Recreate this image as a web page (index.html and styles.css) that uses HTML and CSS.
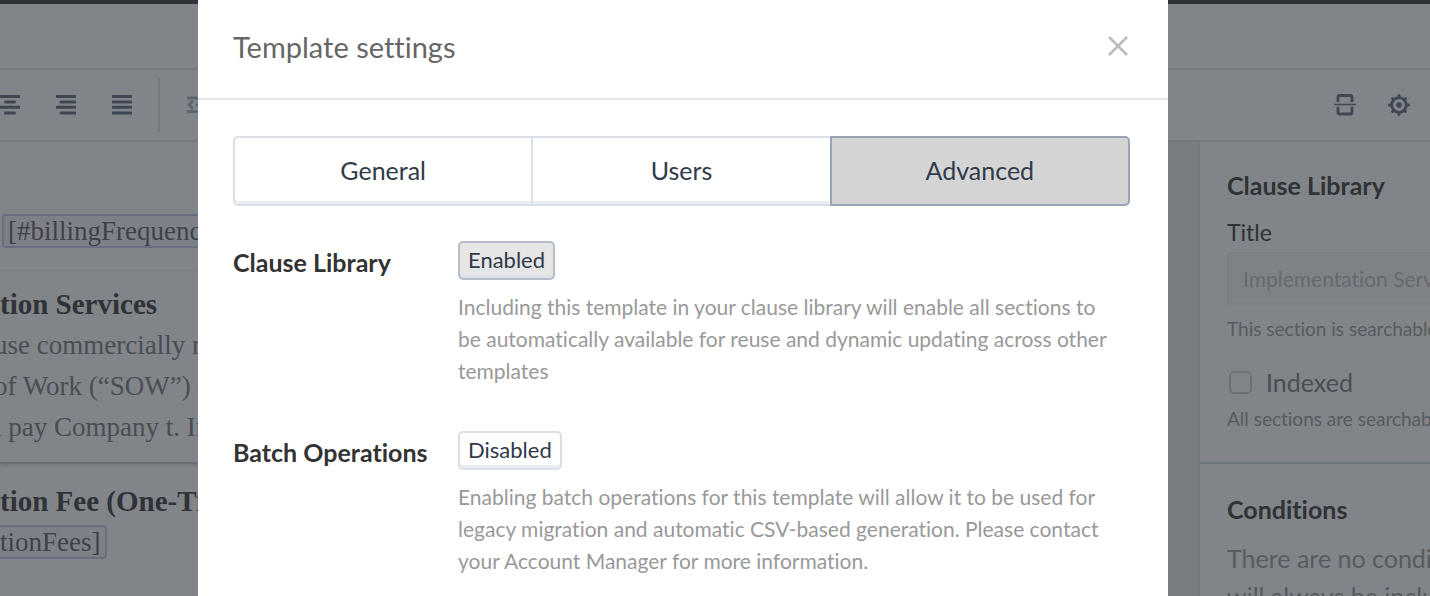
FILE: index.html
```html
<!DOCTYPE html>
<html lang="en">
<head>
  <meta charset="UTF-8" />
  <meta name="viewport" content="width=device-width, initial-scale=1.0"/>
  <title>Template settings</title>
  <link rel="stylesheet" href="styles.css">
</head>
<body>
  <div class="page">
    <div class="topbar"></div>
    <div class="header"></div>

    <div class="toolbar">
      <div class="tools">
        <button type="button" class="tool" aria-label="Align center">
          <svg width="20" height="20" viewBox="0 0 20 20"><path d="M1 1.500h18M5.500 7h9M1 12.300h18M5.500 18h9"/></svg>
        </button>
        <button type="button" class="tool" aria-label="Align right">
          <svg width="20" height="20" viewBox="0 0 20 20"><path d="M1 1.500h18M5 7h14M1 12.300h18M5 18h14"/></svg>
        </button>
        <button type="button" class="tool" aria-label="Justify">
          <svg width="20" height="20" viewBox="0 0 20 20"><path d="M1 1.500h18M1 7h18M1 12.300h18M1 18h18"/></svg>
        </button>
      </div>
      <div class="separator"></div>
      <button type="button" class="tool faded" aria-label="Page break">
        <svg width="20" height="20" viewBox="0 0 20 20"><path d="M2 3h17M2 16.500h17M6 6.500L3 9.800L6 13M11 9.800h8"/></svg>
      </button>
      <div class="tools right">
        <button type="button" class="tool" aria-label="Split section">
          <svg width="22" height="22" viewBox="0 0 22 22">
            <path class="frame" d="M4 8V3Q4 1.500 5.500 1.500h11Q18 1.500 18 3V8M4 12.800v5.700Q4 20 5.500 20h11Q18 20 18 18.500V12.800"/>
            <path class="thin" d="M0.500 10.500h21"/>
          </svg>
        </button>
        <button type="button" class="tool" aria-label="Settings">
          <svg width="22" height="22" viewBox="0 0 22 22">
            <circle class="frame" cx="11" cy="11" r="7.300"/>
            <circle class="solid" cx="11" cy="11" r="2.800"/>
            <path d="M11 1.500v2M11 18.500v2M1.500 11h2M18.500 11h2M4.600 4.600l1 1M16.400 16.400l1 1M17.400 4.600l-1 1M5.600 16.400l-1 1"/>
          </svg>
        </button>
      </div>
    </div>

    <div class="main">
      <div class="document">
        <div class="clause first">
          <p><span class="variable">[#billingFrequency]</span></p>
        </div>
        <div class="clause">
          <h2>tion Services</h2>
          <p class="shifted">use commercially reasonable</p>
          <p class="shifted">of Work (“SOW”) and</p>
          <p class="shifted">l pay Company t. In</p>
        </div>
        <div class="clause next">
          <h2>tion Fee (One-Time)</h2>
          <p><span class="variable cut">tionFees]</span></p>
        </div>
      </div>

      <div class="sidebar">
        <div class="panel">
          <h3>Clause Library</h3>
          <label for="title" class="field-label">Title</label>
          <input type="text" id="title" class="field" placeholder="Implementation Services">
          <p class="hint">This section is searchable</p>
          <div class="check">
            <input type="checkbox" id="indexed">
            <label for="indexed">Indexed</label>
          </div>
          <p class="hint">All sections are searchable</p>
        </div>
        <div class="panel">
          <h3>Conditions</h3>
          <p class="empty">There are no conditions<br>will always be included</p>
        </div>
      </div>
    </div>
  </div>

  <div class="backdrop">
    <div class="modal" role="dialog" aria-labelledby="modal-title">
      <div class="modal-header">
        <h1 id="modal-title">Template settings</h1>
        <button type="button" class="close" aria-label="Close">
          <svg width="20" height="20" viewBox="0 0 20 20"><path d="M1 1l18 18M19 1L1 19"/></svg>
        </button>
      </div>
      <div class="modal-body">
        <div class="tabs">
          <button type="button" class="tab">General</button>
          <button type="button" class="tab">Users</button>
          <button type="button" class="tab active">Advanced</button>
        </div>

        <div class="setting">
          <h2>Clause Library</h2>
          <div class="setting-content">
            <button type="button" class="toggle on">Enabled</button>
            <p>Including this template in your clause library will enable all sections to<br>be automatically available for reuse and dynamic updating across other<br>templates</p>
          </div>
        </div>

        <div class="setting">
          <h2>Batch Operations</h2>
          <div class="setting-content">
            <button type="button" class="toggle">Disabled</button>
            <p>Enabling batch operations for this template will allow it to be used for<br>legacy migration and automatic CSV-based generation. Please contact<br>your Account Manager for more information.</p>
          </div>
        </div>
      </div>
    </div>
  </div>
</body>
</html>
```
FILE: styles.css
```css
* {
  box-sizing: border-box;
}

body {
  font-family: Lato, "Open Sans", sans-serif;
  font-variant-ligatures: none;
  margin: 0;
  background-color: #fff;
  color: #333;
}

h1, h2, h3, p {
  margin: 0;
}

button {
  font-family: inherit;
  font-variant-ligatures: none;
  cursor: pointer;
}

.page {
  height: 100vh;
  overflow: hidden;
  display: flex;
  flex-direction: column;
}

.topbar {
  height: 4px;
  flex: none;
  background-color: #303030;
}

.header {
  height: 66px;
  flex: none;
  border-bottom: 2px solid #e0e0e0;
}

.toolbar {
  display: flex;
  align-items: center;
  gap: 26px;
  height: 72px;
  flex: none;
  padding-right: 20px;
  border-bottom: 2px solid #e0e0e0;
}

.tools {
  display: flex;
  gap: 36px;
}

.tools.right {
  margin-left: auto;
  gap: 32px;
}

.tool {
  display: flex;
  padding: 0;
  border: none;
  background: none;
}

.tool svg {
  fill: none;
  stroke: #5a667d;
  stroke-width: 3;
  stroke-linecap: round;
}

.tool .frame {
  stroke-width: 2.8;
  stroke-linecap: butt;
}

.tool .thin {
  stroke-width: 1.5;
}

.tool .solid {
  fill: #5a667d;
  stroke: none;
}

.tool.faded {
  opacity: 0.5;
}

.separator {
  width: 2px;
  height: 54px;
  background-color: #e0e0e0;
}

.main {
  display: flex;
  flex: 1;
  min-height: 0;
  background-color: #ebebeb;
}

.document {
  flex: 1;
  margin-right: 60px;
  padding-top: 69px;
  background-color: #fff;
  font-family: "Liberation Serif", serif;
  font-size: 27px;
  line-height: 41px;
  color: #777;
  white-space: nowrap;
}

.clause {
  padding: 13px 0 14px;
  border-bottom: 2px solid #ccc;
  box-shadow: 0 2px 3px #ddd;
}

.clause.first {
  padding: 0 2px 18px;
  border-bottom: 1px solid #ebebeb;
  box-shadow: none;
}

.clause.next {
  padding-top: 17px;
  border: none;
  box-shadow: none;
}

.clause h2 {
  font-size: 29px;
  color: #333;
}

.clause .shifted {
  margin-left: -6px;
}

.variable {
  padding: 0 4px;
  border: 2px solid #c9c5ee;
  border-radius: 4px;
  background-color: #f7f6ff;
  color: #5a5a64;
}

.variable.cut {
  padding-left: 0;
  border-left: none;
  border-radius: 0 4px 4px 0;
}

.sidebar {
  width: 232px;
  flex: none;
  border-left: 2px solid #e0e0e0;
  background-color: #fff;
  overflow: hidden;
  white-space: nowrap;
}

.panel {
  padding: 29px 0 31px 27px;
  border-bottom: 2px solid #d0dae0;
}

.panel + .panel {
  padding-top: 31px;
}

.panel h3 {
  margin-bottom: 19px;
  font-size: 25px;
  line-height: 28px;
}

.field-label {
  display: block;
  margin-bottom: 6px;
  font-size: 23px;
  line-height: 28px;
}

.field {
  display: block;
  width: 320px;
  height: 53px;
  padding: 0 14px;
  border: 2px solid #f0f0f0;
  border-radius: 4px;
  background-color: #f8fbfb;
  font-family: inherit;
  font-size: 21px;
  font-variant-ligatures: none;
}

.field::placeholder {
  color: #bbb;
}

.hint {
  margin-top: 12px;
  font-size: 19px;
  line-height: 24px;
  color: #999;
}

.check {
  display: flex;
  align-items: center;
  gap: 14px;
  margin-top: 27px;
  padding-left: 2px;
  font-size: 25px;
  line-height: 28px;
  color: #777;
}

.check input {
  appearance: none;
  width: 23px;
  height: 23px;
  margin: 0;
  border: 2px solid #ccc;
  border-radius: 5px;
}

.check + .hint {
  margin-top: 11px;
}

.panel .hint + .check {
  margin-top: 27px;
}

.panel h3 + .empty {
  margin-top: -3px;
}

.empty {
  font-size: 25px;
  line-height: 38px;
  color: #999;
}

.backdrop {
  position: fixed;
  inset: 0;
  display: flex;
  padding: 0 262px 0 198px;
  background-color: rgba(45, 50, 57, 0.6);
  overflow: hidden;
}

.modal {
  flex: 1;
  min-height: 100%;
  background-color: #fff;
}

.modal-header {
  display: flex;
  justify-content: space-between;
  align-items: center;
  height: 100px;
  padding: 0 40px 6px 35px;
  border-bottom: 2px solid #e5e5e5;
}

.modal-header h1 {
  font-size: 29px;
  font-weight: normal;
  color: #666;
}

.close {
  display: flex;
  padding: 0;
  border: none;
  background: none;
}

.close svg {
  stroke: #bbb;
  stroke-width: 2.5;
}

.modal-body {
  padding: 36px 38px 0 35px;
}

.tabs {
  display: flex;
  margin-bottom: 35px;
}

.tab {
  flex: 1;
  height: 70px;
  margin-left: -2px;
  padding-bottom: 3px;
  border: 2px solid #dbe0e6;
  background-color: #fff;
  box-shadow: inset 0 -3px 0 #e9ecf0;
  font-size: 25px;
  color: #303a48;
}

.tab:first-child {
  margin-left: 0;
  border-radius: 5px 0 0 5px;
}

.tab:last-child {
  border-radius: 0 5px 5px 0;
}

.tab.active {
  border-color: #98a4b4;
  background-color: #d4d4d4;
  box-shadow: none;
}

.setting {
  display: flex;
  margin-bottom: 44px;
}

.setting h2 {
  width: 225px;
  flex: none;
  padding-top: 5px;
  font-size: 25px;
  line-height: 32px;
}

.toggle {
  display: block;
  height: 39px;
  margin-bottom: 11px;
  padding: 0 8px 2px;
  border: 2px solid #dbe0e6;
  border-radius: 5px;
  background-color: #fff;
  box-shadow: inset 0 -3px 0 #e9ecf0;
  font-size: 22px;
  color: #303a48;
}

.toggle.on {
  border-color: #b4bdca;
  background-color: #e6e6e6;
  box-shadow: inset 0 -3px 0 #dde0e6;
}

.setting p {
  font-size: 21px;
  line-height: 32px;
  color: #999;
  white-space: nowrap;
}
```
